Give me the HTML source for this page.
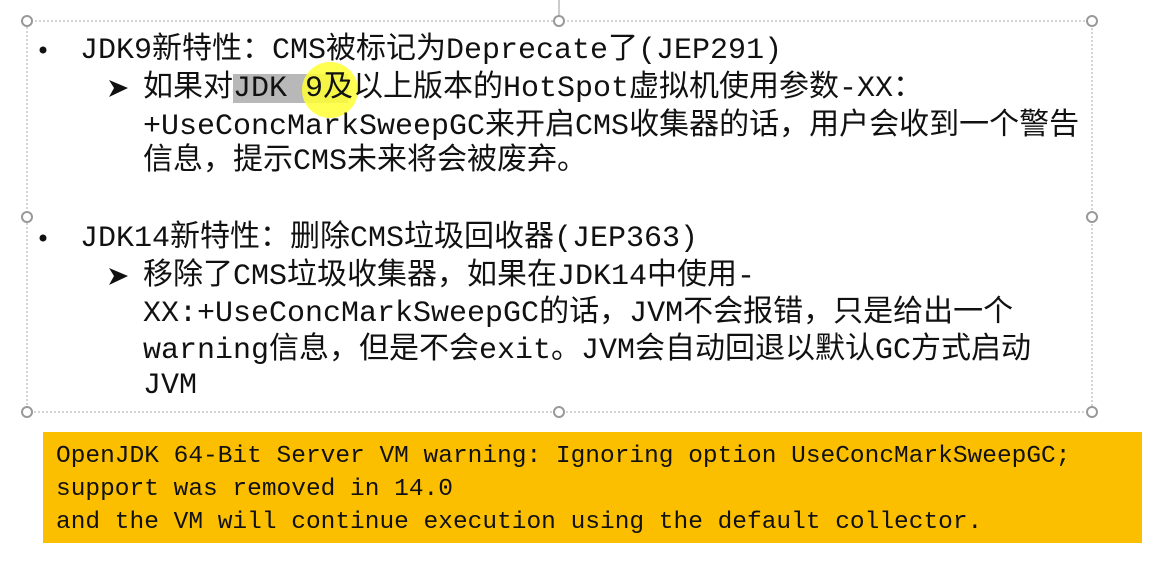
<!DOCTYPE html>
<html><head><meta charset="utf-8"><style>
html,body{margin:0;padding:0;background:#fff;width:1155px;height:565px;overflow:hidden;position:relative}
.t{position:absolute;white-space:nowrap;font-family:"Liberation Mono","Noto Sans CJK SC",monospace;font-size:30px;line-height:37px;color:#111;letter-spacing:0px}
.b{position:absolute;font-family:"DejaVu Sans",sans-serif;font-size:26px;line-height:37px;color:#111}
.box{position:absolute;left:43px;top:432px;width:1099px;height:111px;background:#fbbf00}
.m{position:absolute;left:56px;white-space:nowrap;font-family:"Liberation Mono",monospace;font-size:24.5px;line-height:33px;color:#111}
</style></head><body>
<svg width="1155" height="565" style="position:absolute;left:0;top:0">
<line x1="559" y1="0" x2="559" y2="16" stroke="#999" stroke-width="1"/>
<rect x="27" y="21" width="1065" height="391" fill="none" stroke="#aaa" stroke-width="1" stroke-dasharray="2,2"/>
<rect x="233" y="74" width="115" height="29" fill="#b8b8b8"/>
<circle cx="330" cy="90" r="28" fill="#ffff33" opacity="0.85"/>
<g fill="#fff" stroke="#999" stroke-width="2">
<circle cx="27" cy="21" r="5"/><circle cx="559" cy="21" r="5"/><circle cx="1092" cy="21" r="5"/>
<circle cx="27" cy="217" r="5"/><circle cx="1092" cy="217" r="5"/>
<circle cx="27" cy="412" r="5"/><circle cx="559" cy="412" r="5"/><circle cx="1092" cy="412" r="5"/>
</g>
<circle cx="43" cy="50" r="3.5" fill="#111"/>
<circle cx="43" cy="238" r="3.5" fill="#111"/>
<path d="M109 80 L128 88 L109 97 L114 88 Z" fill="#111"/>
<path d="M109 268 L128 276 L109 285 L114 276 Z" fill="#111"/>
</svg>
<div class="t" style="left:80px;top:33px">JDK9新特性：CMS被标记为Deprecate了(JEP291)</div>
<div class="t" style="left:143px;top:71px">如果对JDK 9及以上版本的HotSpot虚拟机使用参数-XX：</div>
<div class="t" style="left:143px;top:109px">+UseConcMarkSweepGC来开启CMS收集器的话，用户会收到一个警告</div>
<div class="t" style="left:143px;top:144px">信息，提示CMS未来将会被废弃。</div>
<div class="t" style="left:80px;top:221px">JDK14新特性：删除CMS垃圾回收器(JEP363)</div>
<div class="t" style="left:143px;top:259px">移除了CMS垃圾收集器，如果在JDK14中使用-</div>
<div class="t" style="left:143px;top:296px">XX:+UseConcMarkSweepGC的话，JVM不会报错，只是给出一个</div>
<div class="t" style="left:143px;top:333px">warning信息，但是不会exit。JVM会自动回退以默认GC方式启动</div>
<div class="t" style="left:143px;top:368px">JVM</div>
<div class="box"></div>
<div class="m" style="top:440px">OpenJDK 64-Bit Server VM warning: Ignoring option UseConcMarkSweepGC;</div>
<div class="m" style="top:473px">support was removed in 14.0</div>
<div class="m" style="top:506px">and the VM will continue execution using the default collector.</div>
</body></html>
